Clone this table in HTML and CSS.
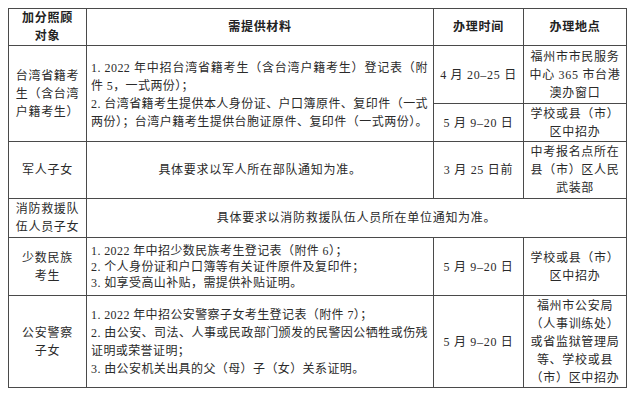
FILE: index.html
```html
<!DOCTYPE html>
<html lang="zh-CN">
<head>
<meta charset="utf-8">
<title>加分照顾对象办理表</title>
<link rel="stylesheet" href="styles.css">
</head>
<body>
<div class="table">
  <div class="cell head">加分照顾<br>对象</div>
  <div class="cell head">需提供材料</div>
  <div class="cell head">办理时间</div>
  <div class="cell head">办理地点</div>

  <div class="cell rspan">台湾省籍考<br>生（含台湾<br>户籍考生）</div>
  <div class="cell mat rspan tw">
    <div class="ln full">1. 2022 年中招台湾省籍考生（含台湾户籍考生）登记表（附</div>
    <div class="ln">件 5，一式两份）；</div>
    <div class="ln full">2. 台湾省籍考生提供本人身份证、户口簿原件、复印件（一式</div>
    <div class="ln full">两份）；台湾户籍考生提供台胞证原件、复印件（一式两份）。</div>
  </div>
  <div class="cell">4 月 20–25 日</div>
  <div class="cell place">福州市市民服务<br>中心 365 市台港<br>澳办窗口</div>
  <div class="cell">5 月 9–20 日</div>
  <div class="cell place">学校或县（市）<br>区中招办</div>

  <div class="cell">军人子女</div>
  <div class="cell">具体要求以军人所在部队通知为准。</div>
  <div class="cell">3 月 25 日前</div>
  <div class="cell place">中考报名点所在<br>县（市）区人民<br>武装部</div>

  <div class="cell">消防救援队<br>伍人员子女</div>
  <div class="cell cspan">具体要求以消防救援队伍人员所在单位通知为准。</div>

  <div class="cell">少数民族<br>考生</div>
  <div class="cell mat tight">
    <div class="ln">1. 2022 年中招少数民族考生登记表（附件 6）；</div>
    <div class="ln">2. 个人身份证和户口簿等有关证件原件及复印件；</div>
    <div class="ln">3. 如享受高山补贴，需提供补贴证明。</div>
  </div>
  <div class="cell">5 月 9–20 日</div>
  <div class="cell place">学校或县（市）<br>区中招办</div>

  <div class="cell">公安警察<br>子女</div>
  <div class="cell mat">
    <div class="ln">1. 2022 年中招公安警察子女考生登记表（附件 7）；</div>
    <div class="ln full">2. 由公安、司法、人事或民政部门颁发的民警因公牺牲或伤残</div>
    <div class="ln">证明或荣誉证明；</div>
    <div class="ln">3. 由公安机关出具的父（母）子（女）关系证明。</div>
  </div>
  <div class="cell">5 月 9–20 日</div>
  <div class="cell place">福州市公安局<br>（人事训练处）<br>或省监狱管理局<br>等、学校或县<br>（市）区中招办</div>
</div>
</body>
</html>
```

FILE: styles.css
```css
html, body {
  background: #ffffff;
}

body {
  margin: 0;
  padding: 8px 0 0 8px;
  font-family: "Liberation Serif", "Noto Sans CJK SC", serif;
  font-size: 12px;
  color: #2a2a2a;
}

.table {
  display: grid;
  grid-template-columns: 77px 346px 89px 102px;
  grid-template-rows: 36px 57px 37px 56px 38px 57px 91px;
  gap: 1px;
  padding: 1px;
  background: #4a4a4a;
  width: max-content;
}

.cell {
  background: #ffffff;
  display: flex;
  align-items: center;
  justify-content: center;
  text-align: center;
  line-height: 18px;
  letter-spacing: 0.7px;
  white-space: nowrap;
}

.head {
  font-weight: bold;
  color: #222222;
}

.rspan {
  grid-row: span 2;
}

.cspan {
  grid-column: span 3;
}

.mat {
  flex-direction: column;
  align-items: stretch;
  justify-content: center;
  text-align: left;
  padding: 0 5px 0 4px;
  letter-spacing: 0.4px;
}

.tw {
  line-height: 18px;
  padding-top: 3px;
}

.tight {
  line-height: 16px;
}

.ln {
  white-space: nowrap;
}

.full {
  text-align: justify;
  text-align-last: justify;
}

.place {
  line-height: 18px;
}
```
